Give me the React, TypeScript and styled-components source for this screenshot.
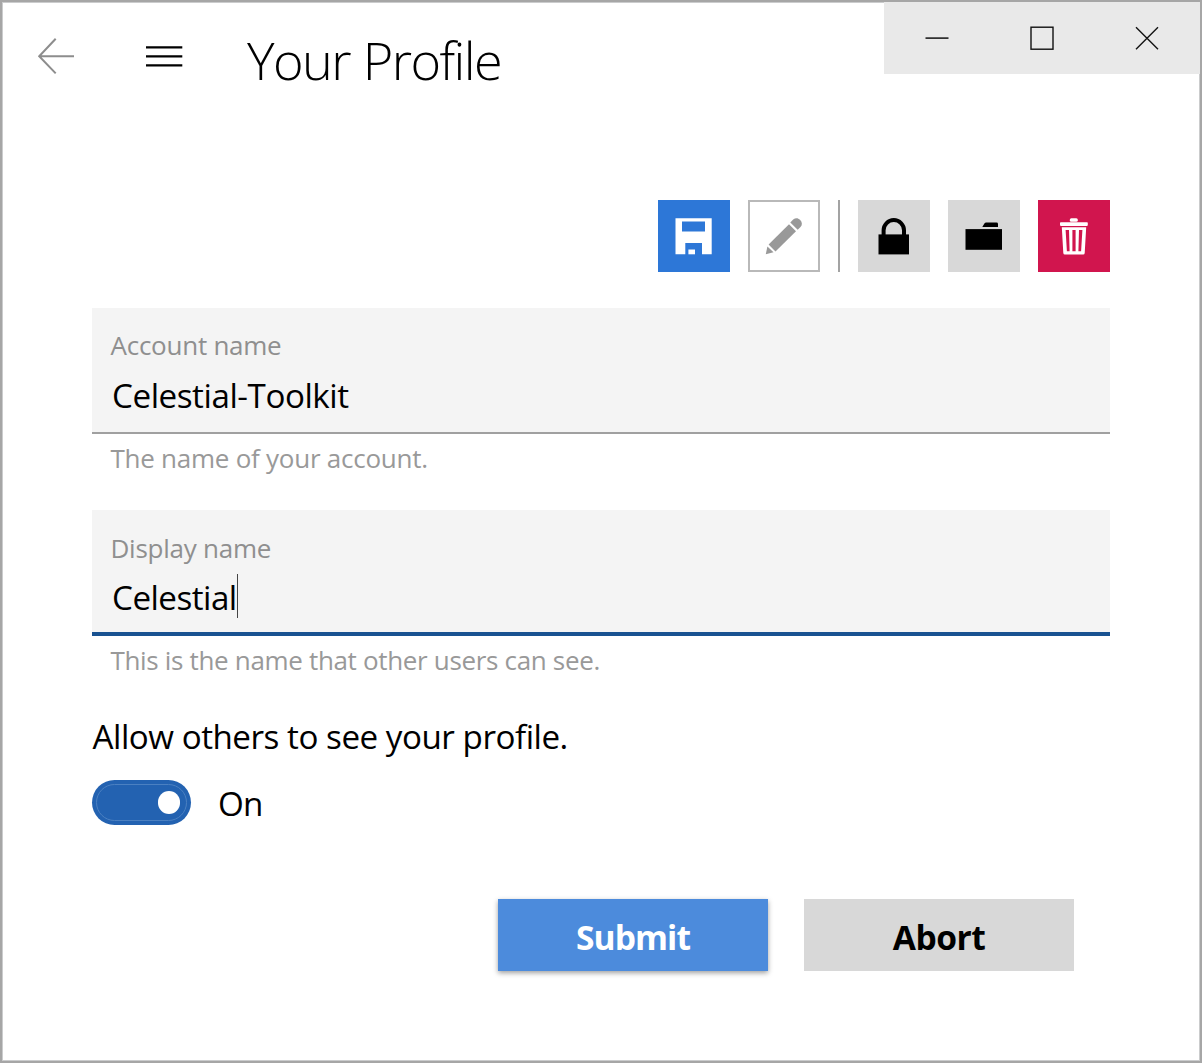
import React from "react";
import styled, { createGlobalStyle, css } from "styled-components";

const GlobalStyle = createGlobalStyle`
  * { box-sizing: border-box; }
  body { margin: 0; background: #fff; }
  button, input { font: inherit; margin: 0; }
`;

const Window = styled.div`
  width: 1202px;
  height: 1063px;
  border: 2px solid #a6a6a6;
  background: #fff;
  box-shadow: inset 0 0 0 1px #cbcccd;
  font-family: "Open Sans", "Noto Sans", sans-serif;
  color: #000;
  display: flex;
  flex-direction: column;
  overflow: hidden;
`;

const Header = styled.header`
  display: flex;
  height: 198px;
  align-items: flex-start;
`;

const NavButton = styled.button`
  width: 108px;
  height: 108px;
  padding: 0;
  border: 0;
  background: none;
  display: block;
  svg { display: block; }
`;

const Title = styled.h1`
  margin: 22px 0 0 29px;
  font-size: 52.2px;
  font-weight: 300;
  line-height: 72px;
  letter-spacing: -1.6px;
  word-spacing: 1px;
  white-space: nowrap;
`;

const CaptionBar = styled.div`
  margin-left: auto;
  width: 316px;
  height: 72px;
  background: #e9e9e9;
  display: grid;
  grid-template-columns: repeat(3, 1fr);
`;

const CaptionButton = styled.button`
  border: 0;
  padding: 0;
  background: none;
  display: flex;
  align-items: center;
  justify-content: center;
`;

const Content = styled.main`
  padding: 0 90px;
  display: flex;
  flex-direction: column;
`;

const Toolbar = styled.div`
  display: flex;
  justify-content: flex-end;
  gap: 18px;
  height: 72px;
  margin-bottom: 36px;
`;

const ToolButton = styled.button<{ $bg: string; $fg: string; $outlined?: boolean }>`
  width: 72px;
  height: 72px;
  padding: 0;
  border: 0;
  background: ${(p) => p.$bg};
  color: ${(p) => p.$fg};
  ${(p) => p.$outlined && css`box-shadow: inset 0 0 0 2px #b9b9b9;`}
  svg { display: block; }
`;

const Separator = styled.div`
  width: 2px;
  background: #a3a3a3;
`;

const Field = styled.div<{ $height: number }>`
  height: ${(p) => p.$height}px;
`;

const FieldBox = styled.label<{ $focused?: boolean }>`
  display: flex;
  flex-direction: column;
  height: 126px;
  padding: ${(p) => (p.$focused ? "20px" : "19px")} 18px 0;
  background: #f4f4f4;
  border-bottom: ${(p) => (p.$focused ? "4px solid #195291" : "2px solid #a0a0a0")};
`;

const FieldLabel = styled.span`
  padding-left: 0.5px;
  font-size: 26px;
  line-height: 36px;
  letter-spacing: -0.25px;
  color: #8f8f8f;
  white-space: nowrap;
`;

const FieldValue = styled.span<{ $up?: boolean }>`
  display: flex;
  align-items: center;
  height: 48px;
  margin-top: ${(p) => (p.$up ? "8px" : "9px")};
  padding-left: 2px;
  font-size: 33.2px;
  line-height: 48px;
  letter-spacing: ${(p) => (p.$up ? "-0.52px" : "-0.45px")};
  white-space: nowrap;
`;

const Caret = styled.span`
  width: 1px;
  height: 44px;
  margin-top: -4px;
  background: #444;
`;

const Helper = styled.div<{ $spacing: number }>`
  padding: 6px 18px 0 18.5px;
  font-size: 26px;
  line-height: 36px;
  letter-spacing: ${(p) => p.$spacing}px;
  color: #999;
  white-space: nowrap;
`;

const Question = styled.div`
  padding: 1px 0 0 0.5px;
  font-size: 33.2px;
  line-height: 48px;
  letter-spacing: -0.48px;
  white-space: nowrap;
`;

const SwitchRow = styled.div`
  display: flex;
  align-items: center;
  height: 45px;
  margin-top: 19px;
  gap: 27px;
`;

const Switch = styled.button`
  width: 99px;
  height: 45px;
  border: 0;
  border-radius: 23px;
  padding: 4px;
  background: #2362b1;
`;

const SwitchTrack = styled.span`
  display: flex;
  align-items: center;
  justify-content: flex-end;
  height: 37px;
  border-radius: 19px;
  border: 1px solid #4b80c1;
  padding-right: 6px;
`;

const Knob = styled.span`
  width: 22.5px;
  height: 22.5px;
  border-radius: 50%;
  background: #fff;
`;

const SwitchText = styled.span`
  font-size: 33.2px;
  line-height: 44px;
  letter-spacing: -0.8px;
  padding-top: 3px;
`;

const Actions = styled.div`
  display: flex;
  justify-content: flex-end;
  gap: 36px;
  margin-top: 74px;
  padding-right: 36px;
`;

const ActionButton = styled.button<{ $primary?: boolean; $tracking: number }>`
  width: 270px;
  height: 72px;
  border: 0;
  padding: 3px 0 0;
  font-size: 33.6px;
  font-weight: 700;
  line-height: 48px;
  letter-spacing: ${(p) => p.$tracking}px;
  background: ${(p) => (p.$primary ? "#4c8bdc" : "#d8d8d8")};
  color: ${(p) => (p.$primary ? "#fff" : "#000")};
  ${(p) => p.$primary && css`box-shadow: 0 2px 5px rgba(0, 0, 0, 0.38);`}
`;

const Glyph = ({ children }: { children: React.ReactNode }) => (
  <svg width="72" height="72" viewBox="0 0 72 72" fill="currentColor">{children}</svg>
);

export default function App() {
  return (
    <>
      <GlobalStyle />
      <Window>
        <Header>
          <NavButton aria-label="Back">
            <svg width="108" height="108" fill="none" stroke="#8d8d8d" strokeWidth="2">
              <path d="M72 54.2H37.2M53.7 36.8L37.2 54.2L53.7 71.4" />
            </svg>
          </NavButton>
          <NavButton aria-label="Menu">
            <svg width="108" height="108" fill="none" stroke="#000" strokeWidth="2.2">
              <path d="M36 45.3H72.3M36 54.3H72.3M36 63.3H72.3" />
            </svg>
          </NavButton>
          <Title>Your Profile</Title>
          <CaptionBar>
            <CaptionButton aria-label="Minimize">
              <svg width="24" height="24" stroke="#111" strokeWidth="1.5"><path d="M.5 12.1H23.5" /></svg>
            </CaptionButton>
            <CaptionButton aria-label="Maximize">
              <svg width="24" height="24" fill="none" stroke="#111" strokeWidth="1.4"><rect x="1" y="1.2" width="22" height="22" /></svg>
            </CaptionButton>
            <CaptionButton aria-label="Close">
              <svg width="24" height="24" stroke="#111" strokeWidth="1.4"><path d="M1 1.3L23 23.3M23 1.3L1 23.3" /></svg>
            </CaptionButton>
          </CaptionBar>
        </Header>
        <Content>
          <Toolbar>
            <ToolButton $bg="#2d77d7" $fg="#fff" aria-label="Save">
              <Glyph>
                <path fillRule="evenodd" d="M17.5 18.3H53.7V54.3H44V43H27.3V54.3H17.5ZM24 21.5V31.4H47V21.5Z" />
                <path d="M30.4 49.5H37V54.3H30.4Z" />
              </Glyph>
            </ToolButton>
            <ToolButton $bg="#fff" $fg="#999" $outlined aria-label="Edit">
              <Glyph>
                <path d="M41 24.3L48 31.2L27.5 51.4L20.6 44.4Z" />
                <path d="M42.3 22.5L45.2 19.6C47.3 17.6 50 17.7 52 19.7C54.3 22 54.5 25 52.5 27L49.7 29.8Z" />
                <path d="M19.4 46.6L25.5 52.2L17.8 54.3Z" />
              </Glyph>
            </ToolButton>
            <Separator />
            <ToolButton $bg="#d8d8d8" $fg="#000" aria-label="Lock">
              <Glyph>
                <rect x="20.5" y="34.4" width="30.5" height="20" />
                <path d="M25.6 36V30.3A10.2 10.2 0 0 1 46 30.3V36" fill="none" stroke="currentColor" strokeWidth="4" />
              </Glyph>
            </ToolButton>
            <ToolButton $bg="#d8d8d8" $fg="#000" aria-label="Folder">
              <Glyph>
                <rect x="17.5" y="29.1" width="36.5" height="20.7" />
                <path d="M34.3 26.9L36.4 23.6Q37 22.6 38.2 22.6H48.5Q50 22.6 50 24V26.9Z" />
              </Glyph>
            </ToolButton>
            <ToolButton $bg="#d1154e" $fg="#fff" aria-label="Delete">
              <Glyph>
                <rect x="31.8" y="18.2" width="8" height="3.6" rx="1.5" />
                <rect x="22" y="22.3" width="27.8" height="3.6" rx=".8" />
                <path fillRule="evenodd" d="M23.8 27.2H48.2L46.7 52.9Q46.6 54.4 45.1 54.4H26.9Q25.4 54.4 25.3 52.9ZM27.6 30L28.9 51.3H31.6L31 30ZM34.4 30V51.3H37.6V30ZM41 30L40.4 51.3H43.1L44.4 30Z" />
              </Glyph>
            </ToolButton>
          </Toolbar>

          <Field $height={202}>
            <FieldBox>
              <FieldLabel>Account name</FieldLabel>
              <FieldValue>Celestial-Toolkit</FieldValue>
            </FieldBox>
            <Helper $spacing={-0.25}>The name of your account.</Helper>
          </Field>
          <Field $height={202}>
            <FieldBox $focused>
              <FieldLabel>Display name</FieldLabel>
              <FieldValue $up>Celestial<Caret /></FieldValue>
            </FieldBox>
            <Helper $spacing={-0.33}>This is the name that other users can see.</Helper>
          </Field>

          <Question>Allow others to see your profile.</Question>
          <SwitchRow>
            <Switch role="switch" aria-checked="true" aria-label="Profile visibility">
              <SwitchTrack><Knob /></SwitchTrack>
            </Switch>
            <SwitchText>On</SwitchText>
          </SwitchRow>

          <Actions>
            <ActionButton $primary $tracking={-0.9}>Submit</ActionButton>
            <ActionButton $tracking={-0.5}>Abort</ActionButton>
          </Actions>
        </Content>
      </Window>
    </>
  );
}
